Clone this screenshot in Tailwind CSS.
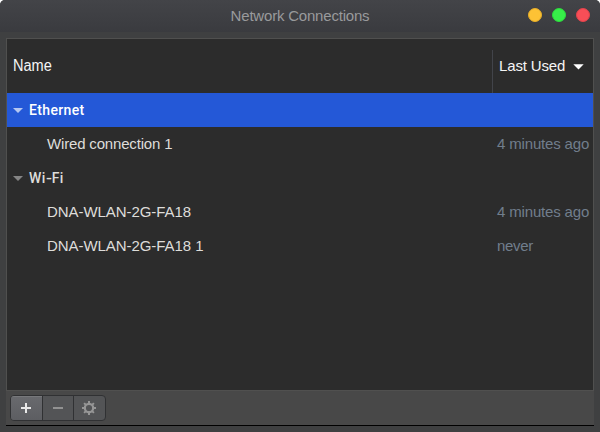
<!DOCTYPE html>
<html lang="en">
<head>
<meta charset="utf-8">
<title>Network Connections</title>
<script src="https://cdn.jsdelivr.net/npm/@tailwindcss/browser@4"></script>
</head>
<body class="h-[432px] w-[600px] overflow-hidden bg-white font-['Liberation_Sans',Arial,sans-serif] text-[15px] leading-[34px] text-[#deddda]">
<div class="flex h-full flex-col rounded-t-[5px] bg-[#3f4041]">
  <header class="relative h-8 shrink-0 rounded-t-[5px] bg-linear-to-b from-[#434448] to-[#3a3b3f] text-center leading-8 text-[#999a9c]">
    <h1 class="tracking-[-0.2px]">Network Connections</h1>
    <div class="absolute top-2 right-[10px] flex gap-[10px]">
      <i class="size-[14px] rounded-full border border-[#e7ae28] bg-[#fdc235]"></i>
      <i class="size-[14px] rounded-full border border-[#2cda3e] bg-[#37ee49]"></i>
      <i class="size-[14px] rounded-full border border-[#e2434c] bg-[#f84e57]"></i>
    </div>
  </header>
  <main class="mx-[6px] mt-[6px] flex h-[388px] flex-col border-b border-black">
    <section class="h-[353px] shrink-0 border border-[#50504f] bg-[#2c2c2c]">
      <div class="flex h-[54px] text-[#f5f5f5]">
        <div class="flex-1 pt-[10px] pl-[6px]"><span class="inline-block origin-left scale-x-[0.91] text-[16px]">Name</span></div>
        <div class="mt-[11px] flex w-[101px] border-l border-[#42444a] pl-[6px]"><span class="-mt-px whitespace-nowrap tracking-[-0.15px]">Last Used</span>
          <svg class="mt-[14px] ml-[8px]" width="11" height="6"><path d="M.3.3h10.4L5.5 5.5z" fill="#fff"/></svg>
        </div>
      </div>
      <div class="flex h-[34px] items-center bg-[#2458d7] pl-[6px] text-white">
        <svg width="10" height="5"><path d="M0 0h10L5 5z" fill="#b5c7f1"/></svg>
        <b class="ml-[6px] font-['Roboto'] text-[14px] font-medium tracking-[0.35px]">Ethernet</b>
      </div>
      <div class="flex h-[34px]"><span class="flex-1 pl-[40px] tracking-[-0.17px]">Wired connection 1</span><span class="w-[96px] whitespace-nowrap tracking-[-0.16px] text-[#717e8c]">4 minutes ago</span></div>
      <div class="flex h-[34px] items-center pl-[6px]">
        <svg width="10" height="5"><path d="M0 0h10L5 5z" fill="#858585"/></svg>
        <b class="ml-[6px] flex font-['Roboto'] text-[14px] font-medium tracking-[0.35px]">Wi<span class="mr-[1px] inline-block origin-left scale-x-[1.25]">-</span>Fi</b>
      </div>
      <div class="flex h-[34px]"><span class="flex-1 pl-[40px] tracking-[-0.06px]">DNA-WLAN-2G-FA18</span><span class="w-[96px] whitespace-nowrap tracking-[-0.16px] text-[#717e8c]">4 minutes ago</span></div>
      <div class="flex h-[34px]"><span class="flex-1 pl-[40px] tracking-[-0.06px]">DNA-WLAN-2G-FA18 1</span><span class="w-[96px] tracking-[-0.3px] text-[#717e8c]">never</span></div>
    </section>
    <footer class="flex-1 bg-[#484848] pt-[4px] pl-[4px]">
      <div class="flex h-[26px] w-[96px] overflow-hidden rounded-[4px] border border-[#303133] bg-[#535456]">
        <button class="flex w-[31px] items-center justify-center border-t border-[#77787b] bg-linear-to-b from-[#68696d] to-[#5d5e62] pr-px pb-px"><svg width="10" height="10"><path d="M5 0v10M0 5h10" stroke="#e9e9e9" stroke-width="2"/></svg></button>
        <button class="flex w-[31px] items-center justify-center border-l border-[#303133]"><svg width="10" height="10"><path d="M0 5h10" stroke="#929292" stroke-width="2"/></svg></button>
        <button class="flex flex-1 items-center justify-center border-l border-[#303133] pr-px"><svg width="14" height="14" viewBox="-7 -7 14 14" fill="none" stroke="#969696"><circle r="4.2" stroke-width="2.2"/><path d="M0-7v3M0 7V4M-7 0h3M7 0H4M-4.9-4.9l2 2M4.9-4.9l-2 2M-4.9 4.9l2-2M4.9 4.9l-2-2" stroke-width="2"/></svg></button>
      </div>
    </footer>
  </main>
</div>
</body>
</html>
